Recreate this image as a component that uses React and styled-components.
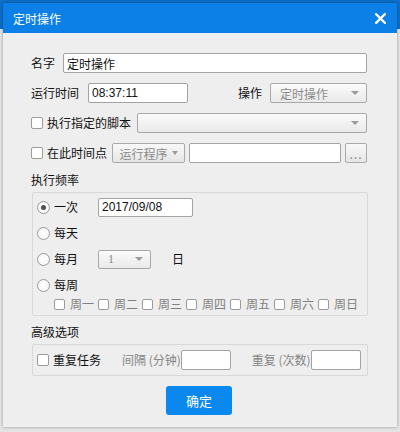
import React from "react";
import styled, { createGlobalStyle } from "styled-components";

const GlobalStyle = createGlobalStyle`
  html, body { margin: 0; padding: 0; }
  body {
    font-family: "Noto Sans CJK SC", "Liberation Sans", sans-serif;
    font-size: 12px;
    color: #111;
  }
  * { box-sizing: border-box; }
`;

const Backdrop = styled.div`
  width: 400px;
  height: 432px;
  padding: 3px 3px 5px 3px;
  background: linear-gradient(#0d6fc9 0, #0d6fc9 29px, #e4e4e4 29px);
`;

const Dialog = styled.div`
  width: 394px;
  height: 424px;
  background: #eeeeee;
  box-shadow: 0 0 3px rgba(0, 0, 0, 0.35);
  display: flex;
  flex-direction: column;
`;

const TitleBar = styled.div`
  height: 30px;
  flex: none;
  background: #0c80e6;
  color: #fff;
  display: flex;
  align-items: center;
  justify-content: space-between;
  padding: 0 11px 0 10px;
  font-size: 12px;
`;

const Body = styled.div`
  flex: 1;
  display: flex;
  flex-direction: column;
  padding: 20px 30px 11px 28px;
`;

const Row = styled.div`
  display: flex;
  align-items: center;
  height: 20px;
  margin-bottom: ${(p) => p.$mb ?? 10}px;
`;

const Label = styled.span`
  color: ${(p) => (p.$muted ? "#858585" : "#111")};
  margin-right: ${(p) => p.$mr ?? 0}px;
  margin-left: ${(p) => p.$ml ?? 0}px;
  white-space: nowrap;
  line-height: 16px;
`;

const Spacer = styled.div`
  flex: 1;
`;

const TextInput = styled.input`
  height: ${(p) => p.$h ?? 20}px;
  width: ${(p) => (p.$w ? `${p.$w}px` : "auto")};
  flex: ${(p) => (p.$grow ? 1 : "none")};
  min-width: 0;
  border: 1px solid #a3a3a3;
  border-radius: 2px;
  background: #fff;
  padding: 0 3px;
  margin: 0 ${(p) => p.$mx ?? 0}px;
  font-family: "Liberation Sans", "Noto Sans CJK SC", sans-serif;
  font-size: 12px;
  color: #111;
  outline: none;
`;

const SelectBox = styled.div`
  height: ${(p) => p.$h ?? 20}px;
  width: ${(p) => (p.$w ? `${p.$w}px` : "auto")};
  flex: ${(p) => (p.$grow ? 1 : "none")};
  border: 1px solid #a8a8a8;
  border-radius: 2px;
  background: linear-gradient(#fbfbfb, #e9e9e9);
  display: flex;
  align-items: center;
  padding: 0 7px 0 ${(p) => p.$pl ?? 9}px;
  color: #8a8a8a;
  font-family: ${(p) => (p.$latin ? '"Liberation Serif", serif' : '"Noto Sans CJK SC", sans-serif')};
  font-size: 12px;
`;

const Caret = styled.span`
  margin-left: auto;
  width: 0;
  height: 0;
  border-left: 4px solid transparent;
  border-right: 4px solid transparent;
  border-top: 4px solid #9a9a9a;
`;

const SmallCaret = styled(Caret)`
  margin-left: 4px;
  border-left-width: 3px;
  border-right-width: 3px;
  border-top-width: 4px;
`;

const ToolButton = styled.div`
  height: 20px;
  width: ${(p) => p.$w}px;
  flex: none;
  border: 1px solid #aaaaaa;
  border-radius: 2px;
  background: linear-gradient(#f8f8f8, #e6e6e6);
  color: #8a8a8a;
  display: flex;
  align-items: center;
  justify-content: center;
  font-size: 12px;
  letter-spacing: ${(p) => p.$ls ?? 0}px;
`;

const Check = styled.span`
  width: ${(p) => p.$s ?? 12}px;
  height: ${(p) => p.$s ?? 12}px;
  flex: none;
  border: 1px solid #9b9b9b;
  border-radius: 2px;
  background: #fff;
  margin-right: ${(p) => p.$mr ?? 4}px;
`;

const Radio = styled.span`
  width: 13px;
  height: 13px;
  flex: none;
  border-radius: 50%;
  border: 1px solid #9a9a9a;
  background: radial-gradient(circle, #fff 0, #f2f2f2 100%);
  margin-right: 4px;
  display: flex;
  align-items: center;
  justify-content: center;
  &::after {
    content: "";
    width: 5px;
    height: 5px;
    border-radius: 50%;
    background: ${(p) => (p.$on ? "#4f4f4f" : "transparent")};
  }
`;

const SectionLabel = styled.div`
  line-height: 16px;
  margin: ${(p) => p.$mt ?? 0}px 0 4px 0;
`;

const Group = styled.div`
  border: 1px solid #d9d9d9;
  border-radius: 2px;
  margin: 0 -1px 0 1px;
  padding: ${(p) => p.$pad};
  display: flex;
  flex-direction: column;
`;

const RadioItem = styled.div`
  display: flex;
  align-items: center;
  width: 61px;
  flex: none;
`;

const WeekRow = styled.div`
  display: flex;
  align-items: center;
  height: 12px;
  margin-top: 3px;
  padding-left: 17px;
`;

const WeekItem = styled.div`
  display: flex;
  align-items: center;
  margin-right: 4px;
  color: #808080;
  line-height: 12px;
`;

const ButtonBar = styled.div`
  display: flex;
  justify-content: center;
  margin-top: 10px;
`;

const PrimaryButton = styled.button`
  width: 66px;
  height: 29px;
  border: none;
  border-radius: 3px;
  background: #0b88ee;
  color: #fff;
  font-family: "Noto Sans CJK SC", sans-serif;
  font-size: 13px;
  padding: 0;
`;

const CloseIcon = () => (
  <svg width="11" height="11" viewBox="0 0 11 11">
    <path d="M1.2 1.2 L9.8 9.8 M9.8 1.2 L1.2 9.8" stroke="#fff" strokeWidth="2.3" strokeLinecap="square" />
  </svg>
);

const days = ["周一", "周二", "周三", "周四", "周五", "周六", "周日"];

export default function App() {
  return (
    <>
      <GlobalStyle />
      <Backdrop>
        <Dialog>
          <TitleBar>
            <span>定时操作</span>
            <CloseIcon />
          </TitleBar>
          <Body>
            <Row>
              <Label $mr={8}>名字</Label>
              <TextInput $grow defaultValue="定时操作" />
            </Row>
            <Row>
              <Label $mr={9}>运行时间</Label>
              <TextInput $w={100} defaultValue="08:37:11" />
              <Spacer />
              <Label $mr={8}>操作</Label>
              <SelectBox $w={97}>
                定时操作
                <Caret />
              </SelectBox>
            </Row>
            <Row>
              <Check />
              <Label $mr={6}>执行指定的脚本</Label>
              <SelectBox $grow>
                <Caret />
              </SelectBox>
            </Row>
            <Row>
              <Check />
              <Label $mr={5}>在此时间点</Label>
              <ToolButton $w={73}>
                运行程序
                <SmallCaret />
              </ToolButton>
              <TextInput $grow $mx={4} />
              <ToolButton $w={22} $ls={1}>...</ToolButton>
            </Row>

            <SectionLabel $mt={-1}>执行频率</SectionLabel>
            <Group $pad="4px 0 5px 4px">
              <Row $mb={6}>
                <RadioItem>
                  <Radio $on />
                  <Label>一次</Label>
                </RadioItem>
                <TextInput $w={95} $h={19} defaultValue="2017/09/08" />
              </Row>
              <Row $mb={6}>
                <RadioItem>
                  <Radio />
                  <Label>每天</Label>
                </RadioItem>
              </Row>
              <Row $mb={6}>
                <RadioItem>
                  <Radio />
                  <Label>每月</Label>
                </RadioItem>
                <SelectBox $w={53} $h={19} $latin>
                  1
                  <Caret />
                </SelectBox>
                <Label $ml={21}>日</Label>
              </Row>
              <Row $mb={0}>
                <RadioItem>
                  <Radio />
                  <Label>每周</Label>
                </RadioItem>
              </Row>
              <WeekRow>
                {days.map((d) => (
                  <WeekItem key={d}>
                    <Check $s={11} $mr={5} />
                    {d}
                  </WeekItem>
                ))}
              </WeekRow>
            </Group>

            <SectionLabel $mt={8}>高级选项</SectionLabel>
            <Group $pad="5px 6px 5px 4px">
              <Row $mb={0}>
                <Check />
                <Label>重复任务</Label>
                <Label $muted $ml={21}>间隔 (分钟)</Label>
                <TextInput $w={50} />
                <Label $muted $ml={21}>重复 (次数)</Label>
                <TextInput $w={50} />
              </Row>
            </Group>

            <ButtonBar>
              <PrimaryButton>确定</PrimaryButton>
            </ButtonBar>
          </Body>
        </Dialog>
      </Backdrop>
    </>
  );
}
